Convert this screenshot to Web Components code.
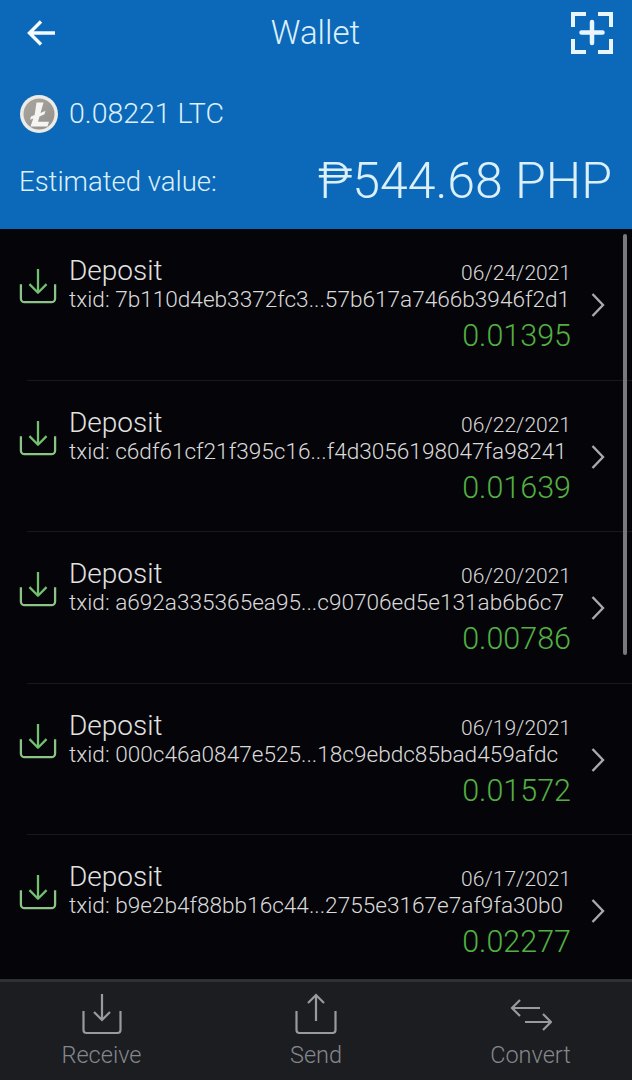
<!DOCTYPE html>
<html>
<head>
<meta charset="utf-8">
<title>Wallet</title>
<style>
  html, body { margin: 0; padding: 0; background: #050509; }
  body { font-family: Roboto, "Liberation Sans", Arial, sans-serif; font-weight: 300; }
</style>
</head>
<body>
<wallet-app>
  <wallet-header slot="header" balance="0.08221 LTC" value="₱544.68 PHP"></wallet-header>
  <tx-row date="06/24/2021" txid="txid: 7b110d4eb3372fc3...57b617a7466b3946f2d1" amount="0.01395"></tx-row>
  <tx-row date="06/22/2021" txid="txid: c6df61cf21f395c16...f4d3056198047fa98241" amount="0.01639"></tx-row>
  <tx-row date="06/20/2021" txid="txid: a692a335365ea95...c90706ed5e131ab6b6c7" amount="0.00786"></tx-row>
  <tx-row date="06/19/2021" txid="txid: 000c46a0847e525...18c9ebdc85bad459afdc" amount="0.01572"></tx-row>
  <tx-row date="06/17/2021" txid="txid: b9e2b4f88bb16c44...2755e3167e7af9fa30b0" amount="0.02277" last></tx-row>
  <tab-bar slot="footer"></tab-bar>
</wallet-app>

<script>
class WalletApp extends HTMLElement {
    constructor() {
        super();
        this.attachShadow({ mode: 'open' });
    }

    connectedCallback() {
        this.shadowRoot.innerHTML = `
        <style>
            :host {
                display: flex;
                flex-direction: column;
                width: 632px;
                height: 1080px;
                overflow: hidden;
                position: relative;
                background: #050509;
            }
            .list { flex: 1; min-height: 0; overflow: hidden; }
            .scrollbar {
                position: absolute;
                left: 623px;
                top: 234px;
                width: 4px;
                height: 421px;
                border-radius: 2px;
                background: #77797c;
            }
        </style>
        <slot name="header"></slot>
        <div class="list"><slot></slot></div>
        <slot name="footer"></slot>
        <div class="scrollbar"></div>
        `;
    }
}

class WalletHeader extends HTMLElement {
    constructor() {
        super();
        this.attachShadow({ mode: 'open' });
    }

    connectedCallback() {
        this.shadowRoot.innerHTML = `
        <style>
            :host {
                display: block;
                height: 229px;
                box-sizing: border-box;
                padding: 0 20px 0 19px;
                background: #0c69b9;
                color: #dcf0fa;
            }
            .nav {
                display: grid;
                grid-template-columns: 1fr auto 1fr;
                align-items: center;
                height: 66px;
            }
            .nav .back { justify-self: start; margin-left: 8px; display: block; }
            .nav .add { justify-self: end; display: block; margin-right: -2px; }
            h1 { margin: 0; font-size: 33px; font-weight: 300; line-height: 66px; }
            .balance {
                display: flex;
                align-items: center;
                gap: 11px;
                margin-top: 29px;
                font-size: 28.500px;
                line-height: 38px;
            }
            .balance svg { display: block; margin-left: 1px; }
            .estimate {
                display: flex;
                justify-content: space-between;
                align-items: center;
                margin-top: 19px;
                font-size: 27.500px;
            }
            .value { font-size: 50px; line-height: 58px; }
        </style>
        <div class="nav">
            <svg class="back" width="30" height="30" viewBox="0 0 30 30" fill="none" stroke="#f2fafd" stroke-width="3.4"><path d="M28 15H3M14 3.5 2.5 15 14 26.5"/></svg>
            <h1>Wallet</h1>
            <svg class="add" width="44" height="44" viewBox="0 0 44 44" fill="none" stroke="#e8f5fb" stroke-width="4"><path d="M16 3H3v13M28 3h13v13M16 41H3V28M28 41h13V28"/><path d="M22 11v21M11.500 21.500h21" stroke-linecap="round" stroke-width="4.500"/></svg>
        </div>
        <div class="balance">
            <svg width="38" height="38" viewBox="0 0 38 38">
                <defs><linearGradient id="coin" x1="0" y1="0" x2="1" y2="1"><stop offset="0" stop-color="#a9a6a0"/><stop offset="1" stop-color="#94918c"/></linearGradient></defs>
                <circle cx="19" cy="19" r="19" fill="#ecebe7"/>
                <circle cx="19" cy="19" r="15.500" fill="url(#coin)"/>
                <path d="M16.500 7.500h7L20.500 18l5-2.200-1 3.500-5 2.200-1.500 5.300h11l-1.500 4.700H10.500l2.800-8-3.300 1.300 1-3.300 3.600-1.400z" fill="#f6f5f2"/>
            </svg>
            <span>${this.getAttribute('balance')}</span>
        </div>
        <div class="estimate">
            <span>Estimated value:</span>
            <span class="value">${this.getAttribute('value')}</span>
        </div>
        `;
    }
}

class TxRow extends HTMLElement {
    constructor() {
        super();
        this.attachShadow({ mode: 'open' });
    }

    connectedCallback() {
        this.shadowRoot.innerHTML = `
        <style>
            :host {
                display: block;
                height: 151.500px;
                box-sizing: border-box;
                padding-top: 24px;
                position: relative;
                color: #d4d4d4;
            }
            .row {
                display: grid;
                grid-template-columns: 38px 502px 36px;
                column-gap: 12px;
                margin-left: 19px;
            }
            .icon { grid-row: 1 / span 3; margin-top: 14px; display: block; }
            .top { display: flex; justify-content: space-between; align-items: baseline; }
            .title { font-size: 28px; line-height: 36px; color: #e2e2e2; }
            .date { font-size: 21px; color: #d8d8d8; }
            .txid { font-size: 22.600px; line-height: 22px; white-space: nowrap; color: #dadada; }
            .amount { font-size: 30.500px; line-height: 36px; margin-top: 7px; text-align: right; color: #52b043; }
            .chev { grid-column: 3; grid-row: 1 / span 3; margin: 39px 0 0 7px; display: block; }
            .divider {
                position: absolute;
                left: 27px;
                right: 0;
                bottom: 0;
                height: 1px;
                background: #18191c;
            }
            :host([last]) .divider { display: none; }
        </style>
        <div class="row">
            <svg class="icon" width="38" height="40" viewBox="0 0 40 40" fill="none" stroke="#8cc488" stroke-width="2.400" stroke-linejoin="round"><path d="M2 17v15a4 4 0 0 0 4 4h28a4 4 0 0 0 4-4V17"/><path d="M20 1v24M11 17l9 9 9-9" stroke="#72c070"/></svg>
            <div class="body">
                <div class="top"><span class="title">Deposit</span><span class="date">${this.getAttribute('date')}</span></div>
                <div class="txid">${this.getAttribute('txid')}</div>
                <div class="amount">${this.getAttribute('amount')}</div>
            </div>
            <svg class="chev" width="16" height="26" viewBox="0 0 16 26" fill="none" stroke="#a9a9ab" stroke-width="2.400"><path d="M2.500 2 13 13 2.500 24"/></svg>
        </div>
        <div class="divider"></div>
        `;
    }
}

class TabItem extends HTMLElement {
    constructor() {
        super();
        this.attachShadow({ mode: 'open' });
    }

    connectedCallback() {
        this.shadowRoot.innerHTML = `
        <style>
            :host {
                display: flex;
                flex-direction: column;
                align-items: center;
                color: #85878d;
                font-size: 23.500px;
            }
            .glyph { height: 48px; display: flex; align-items: flex-end; }
            ::slotted(svg) { display: block; }
            span { line-height: 26px; margin-top: 7px; }
        </style>
        <div class="glyph"><slot></slot></div>
        <span>${this.getAttribute('label')}</span>
        `;
    }
}

class TabBar extends HTMLElement {
    constructor() {
        super();
        this.attachShadow({ mode: 'open' });
    }

    connectedCallback() {
        this.shadowRoot.innerHTML = `
        <style>
            :host {
                display: grid;
                grid-template-columns: 203px 226px 203px;
                height: 101px;
                box-sizing: border-box;
                padding-top: 5px;
                background: #1b1d21;
                border-top: 3px solid #2f3033;
            }
        </style>
        <tab-item label="Receive">
            <svg width="40" height="42" viewBox="0 0 40 42" fill="none" stroke="#9a9a9c" stroke-width="2.200"><path d="M1.500 18v19a3 3 0 0 0 3 3h31a3 3 0 0 0 3-3V18"/><path d="M20 1v26M12 19l8 8 8-8"/></svg>
        </tab-item>
        <tab-item label="Send">
            <svg width="42" height="42" viewBox="0 0 42 42" fill="none" stroke="#9a9a9c" stroke-width="2.200"><path d="M1.500 18v19a3 3 0 0 0 3 3h33a3 3 0 0 0 3-3V18"/><path d="M21 28V2M13 10l8-8 8 8"/></svg>
        </tab-item>
        <tab-item label="Convert">
            <svg width="42" height="34" viewBox="0 0 42 34" fill="none" stroke="#9a9a9c" stroke-width="2.200" style="margin-bottom:3px"><path d="M30 10H2M10 2 2 10l8 8"/><path d="M15 24h26M33 16l8 8-8 8"/></svg>
        </tab-item>
        `;
    }
}

customElements.define('wallet-app', WalletApp);
customElements.define('wallet-header', WalletHeader);
customElements.define('tx-row', TxRow);
customElements.define('tab-item', TabItem);
customElements.define('tab-bar', TabBar);
</script>
</body>
</html>
